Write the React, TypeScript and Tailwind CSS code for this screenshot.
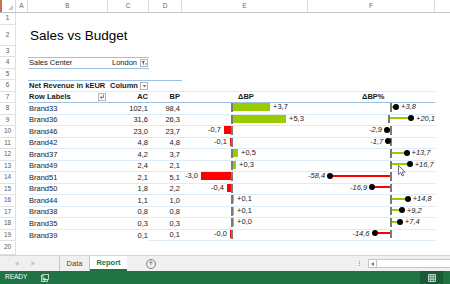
import type { ReactNode } from "react";

type Item = {
  brand: string;
  ac: string;
  bp: string;
  d: number;
  dl: string;
  p: number;
  pl: string;
};

const items: Item[] = [
  { brand: "Brand33", ac: "102,1", bp: "98,4", d: 3.7, dl: "+3,7", p: 3.8, pl: "+3,8" },
  { brand: "Brand36", ac: "31,6", bp: "26,3", d: 5.3, dl: "+5,3", p: 20.1, pl: "+20,1" },
  { brand: "Brand46", ac: "23,0", bp: "23,7", d: -0.7, dl: "-0,7", p: -2.9, pl: "-2,9" },
  { brand: "Brand42", ac: "4,8", bp: "4,8", d: -0.1, dl: "-0,1", p: -1.7, pl: "-1,7" },
  { brand: "Brand37", ac: "4,2", bp: "3,7", d: 0.5, dl: "+0,5", p: 13.7, pl: "+13,7" },
  { brand: "Brand49", ac: "2,4", bp: "2,1", d: 0.3, dl: "+0,3", p: 16.7, pl: "+16,7" },
  { brand: "Brand51", ac: "2,1", bp: "5,1", d: -3.0, dl: "-3,0", p: -58.4, pl: "-58,4" },
  { brand: "Brand50", ac: "1,8", bp: "2,2", d: -0.4, dl: "-0,4", p: -16.9, pl: "-16,9" },
  { brand: "Brand44", ac: "1,1", bp: "1,0", d: 0.1, dl: "+0,1", p: 14.8, pl: "+14,8" },
  { brand: "Brand38", ac: "0,8", bp: "0,8", d: 0.1, dl: "+0,1", p: 9.2, pl: "+9,2" },
  { brand: "Brand35", ac: "0,3", bp: "0,3", d: 0.04, dl: "+0,0", p: 7.4, pl: "+7,4" },
  { brand: "Brand39", ac: "0,1", bp: "0,1", d: -0.04, dl: "-0,0", p: -14.6, pl: "-14,6" },
];

// row number col, A, B, C, D, E, F, G
const COLS = "grid grid-cols-[16px_12px_80px_41px_33px_126px_127px_1fr]";
const GREEN = "bg-[#99cc00]";
const RED = "bg-[#ff0000]";

function RowNum({ n }: { n: number }) {
  return (
    <div className="flex items-center justify-center border-r border-b border-[#e1e1e1] text-[6.5px] text-[#5a5a5a]">
      {n}
    </div>
  );
}

function Row({ n, h, children }: { n: number; h: string; children?: ReactNode }) {
  return (
    <div className={`${COLS} ${h}`}>
      <RowNum n={n} />
      <div />
      {children}
    </div>
  );
}

function DropBox({ children }: { children: ReactNode }) {
  return (
    <span className="flex h-[8px] w-[8px] items-center justify-center border border-[#b5b5b5] bg-white">
      {children}
    </span>
  );
}

function DeltaBar({ d, label }: { d: number; label: string }) {
  const w = Math.max(Math.abs(d) * 10, 1);
  return (
    <div className="flex">
      <div className="flex w-[49px] items-center justify-end">
        {d < 0 ? (
          <>
            <span className="mr-[3px]">{label}</span>
            <div className={`h-[8px] ${RED}`} style={{ width: w }} />
          </>
        ) : null}
      </div>
      <div className="-mb-px w-[2px] bg-[#7a7a7a]" />
      <div className="flex flex-1 items-center">
        {d >= 0 ? (
          <>
            <div className={`h-[8px] ${GREEN}`} style={{ width: w }} />
            <span className="ml-[3px]">{label}</span>
          </>
        ) : null}
      </div>
    </div>
  );
}

function Lollipop({ p, label }: { p: number; label: string }) {
  const len = Math.abs(p) * 1.06;
  return (
    <div className="flex">
      <div className="flex w-[82px] items-center justify-end">
        {p < 0 ? (
          <>
            <span className="mr-[2px] italic">{label}</span>
            <div className="relative -mr-[3px] h-[6px] w-[6px] rounded-full bg-black" />
            <div className={`h-[2px] ${RED}`} style={{ width: len }} />
          </>
        ) : null}
      </div>
      <div className="-mb-px w-[2px] bg-[#7a7a7a]" />
      <div className="flex flex-1 items-center">
        {p >= 0 ? (
          <>
            <div className={`h-[2px] ${GREEN}`} style={{ width: len }} />
            <div className="relative -ml-[3px] h-[6px] w-[6px] rounded-full bg-black" />
            <span className="ml-[2px] italic">{label}</span>
          </>
        ) : null}
      </div>
    </div>
  );
}

export default function App() {
  return (
    <div className="relative flex h-[284px] w-[450px] flex-col overflow-hidden bg-white font-['Liberation_Sans',Arial,sans-serif] text-[7.5px] leading-none text-[#1a1a1a]">
      {/* column letters */}
      <div className={`${COLS} h-[13px] shrink-0 border-b border-[#c4c4c4] text-[6.5px] text-[#666]`}>
        <div className="relative border-r border-l-2 border-r-[#dcdcdc] border-l-[#d06a50]">
          <svg className="absolute right-[2px] bottom-[2px]" width="5" height="5" viewBox="0 0 5 5">
            <path d="M5 0V5H0Z" fill="#c8c8c8" />
          </svg>
        </div>
        {["A", "B", "C", "D", "E", "F"].map((c) => (
          <div key={c} className="flex items-center justify-center border-r border-[#dcdcdc]">
            {c}
          </div>
        ))}
        <div />
      </div>

      {/* sheet */}
      <div className="min-h-0 flex-1 overflow-hidden">
        <Row n={1} h="h-[12px]" />
        <Row n={2} h="h-[20.5px]">
          <div className="col-span-6 flex items-center pl-[2px] text-[13.5px] text-black">Sales vs Budget</div>
        </Row>
        <Row n={3} h="h-[11.5px]" />
        <Row n={4} h="h-[11.5px]">
          <div className="flex items-center border-y border-[#9bc2e6] pl-[1px]">Sales Center</div>
          <div className="flex items-center justify-end gap-[3px] border-y border-[#9bc2e6] pr-[1px]">
            London
            <DropBox>
              <svg width="6" height="6" viewBox="0 0 6 6">
                <path d="M0.5 1H4L2.8 2.6V5L1.8 4.3V2.6Z" fill="#555" />
                <path d="M4 3.5H6L5 5Z" fill="#555" />
              </svg>
            </DropBox>
          </div>
        </Row>
        <Row n={5} h="h-[11.5px]" />
        <Row n={6} h="h-[11.5px]">
          <div className="flex items-center border-t border-b border-t-[#9bc2e6] border-b-[#ddebf7] pl-[1px] font-bold whitespace-nowrap">
            Net Revenue in kEUR
          </div>
          <div className="flex items-center justify-between border-t border-b border-t-[#9bc2e6] border-b-[#ddebf7] pr-[1px] pl-[2px] font-bold">
            Column
            <DropBox>
              <svg width="5" height="4" viewBox="0 0 5 4">
                <path d="M0.5 1H4.5L2.5 3.3Z" fill="#777" />
              </svg>
            </DropBox>
          </div>
          <div className="border-t border-b border-t-[#9bc2e6] border-b-[#ddebf7]" />
          <div className="border-b border-[#ddebf7]" />
          <div className="border-b border-[#ddebf7]" />
        </Row>
        <Row n={7} h="h-[11.5px]">
          <div className="flex items-center justify-between border-b border-[#9bc2e6] pr-[2px] pl-[1px] font-bold">
            Row Labels
            <DropBox>
              <svg width="6" height="6" viewBox="0 0 6 6">
                <path d="M4.5 0.5V3.5H1.5M2.8 2.2L1.3 3.5L2.8 4.8" stroke="#666" strokeWidth="0.8" fill="none" />
              </svg>
            </DropBox>
          </div>
          <div className="flex items-center justify-end border-b border-[#9bc2e6] pr-[1px] font-bold">AC</div>
          <div className="flex items-center justify-end border-b border-[#9bc2e6] pr-[2px] font-bold">BP</div>
          <div className="flex items-center border-b border-[#9bc2e6] pl-[56px] font-bold">ΔBP</div>
          <div className="flex items-center border-b border-[#9bc2e6] pl-[54px] font-bold">ΔBP%</div>
        </Row>
        {items.map((it, i) => {
          const last = i === items.length - 1;
          const line = last ? "" : "border-b border-[#ddebf7]";
          return (
            <Row key={it.brand} n={8 + i} h="h-[11.5px]">
              <div className={`flex items-center pl-[1px] ${line}`}>{it.brand}</div>
              <div className={`flex items-center justify-end pr-[1px] ${line}`}>{it.ac}</div>
              <div className="flex items-center justify-end border-b border-[#ddebf7] pr-[2px]">{it.bp}</div>
              <div className="border-b border-[#ddebf7]">
                <DeltaBar d={it.d} label={it.dl} />
              </div>
              <div className="border-b border-[#ddebf7]">
                <Lollipop p={it.p} label={it.pl} />
              </div>
            </Row>
          );
        })}
        <Row n={20} h="h-[14px]" />
      </div>

      {/* sheet tabs */}
      <div className="flex h-[16px] shrink-0 items-stretch border-t border-[#d4d4d4] bg-[#f0f0f0] text-[7.5px]">
        <div className="flex w-[59px] items-center gap-[12px] pl-[15px]">
          <svg width="4" height="5" viewBox="0 0 4 5">
            <path d="M3.5 0V5L0 2.5Z" fill="#c4c4c4" />
          </svg>
          <svg width="4" height="5" viewBox="0 0 4 5">
            <path d="M0.5 0V5L4 2.5Z" fill="#c4c4c4" />
          </svg>
        </div>
        <div className="flex w-[31px] items-center justify-center border-x border-[#c6c6c6] text-[#444]">Data</div>
        <div className="flex w-[37px] items-center justify-center border-b-2 border-[#217346] bg-white font-bold text-[#217346]">
          Report
        </div>
        <div className="ml-[19px] flex items-center">
          <span className="flex h-[10px] w-[10px] items-center justify-center rounded-full border border-[#808080] text-[9px] leading-none text-[#666]">
            +
          </span>
        </div>
        <div className="flex-1" />
        <div className="mr-[8px] flex flex-col items-center justify-center gap-[1px]">
          <span className="h-[1px] w-[1px] bg-[#999]" />
          <span className="h-[1px] w-[1px] bg-[#999]" />
          <span className="h-[1px] w-[1px] bg-[#999]" />
        </div>
        <div className="flex items-center">
          <span className="flex h-[9px] w-[9px] items-center justify-center border border-[#c6c6c6] bg-white">
            <svg width="3" height="4" viewBox="0 0 3 4">
              <path d="M3 0V4L0 2Z" fill="#777" />
            </svg>
          </span>
          <span className="h-[9px] w-[73px] border-y border-[#c6c6c6] bg-white" />
        </div>
      </div>

      {/* status bar */}
      <div className="flex h-[13px] shrink-0 items-center bg-[#217346] text-[6.5px] text-white">
        <span className="pl-[5px]">READY</span>
        <svg className="ml-[14px]" width="8" height="8" viewBox="0 0 8 8">
          <rect x="0.5" y="1.5" width="6" height="6" fill="none" stroke="#e6efe9" strokeWidth="0.8" />
          <rect x="2" y="0.5" width="5.5" height="5" fill="#217346" stroke="#e6efe9" strokeWidth="0.8" />
          <circle cx="3.5" cy="5.5" r="1.3" fill="#e6efe9" />
        </svg>
        <div className="flex-1" />
        <div className="mr-[7px] flex h-full w-[23px] items-center justify-center bg-[#185c37]">
          <svg width="8" height="8" viewBox="0 0 8 8">
            <path d="M0.5 0.5H7.5V7.5H0.5ZM0.5 2.8H7.5M0.5 5.2H7.5M2.8 0.5V7.5M5.2 0.5V7.5" stroke="#e8f0eb" strokeWidth="0.8" fill="none" />
          </svg>
        </div>
      </div>

      {/* mouse pointer */}
      <svg className="absolute top-[165px] left-[398px]" width="8" height="12" viewBox="0 0 8 12">
        <path d="M0.5 0.5V9.5L2.7 7.5L4.2 11L5.6 10.4L4.1 7H7.2Z" fill="white" stroke="#333" strokeWidth="0.7" />
      </svg>
    </div>
  );
}
